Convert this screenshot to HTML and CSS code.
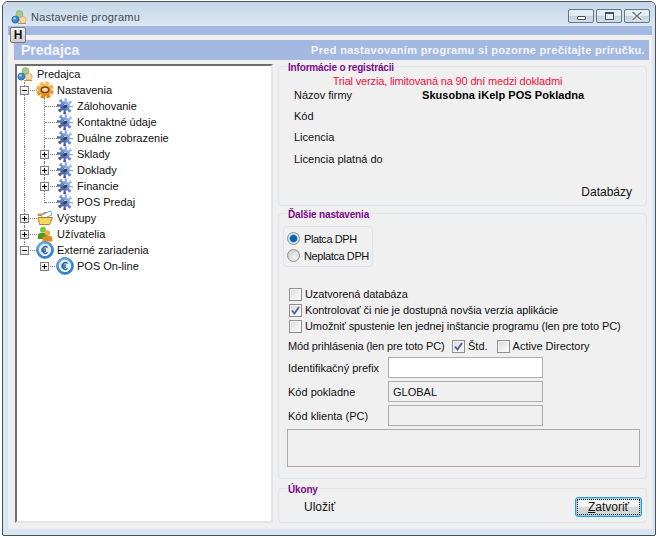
FILE: index.html
```html
<!DOCTYPE html>
<html lang="sk">
<head>
<meta charset="utf-8">
<title>Nastavenie programu</title>
<link rel="stylesheet" href="styles.css">
</head>
<body>
<svg class="defs" width="0" height="0" aria-hidden="true">
  <defs>
    <linearGradient id="gb" x1="0" y1="1" x2="1" y2="0">
      <stop offset="0" stop-color="#2c3f7c"/>
      <stop offset=".5" stop-color="#6a8bcd"/>
      <stop offset="1" stop-color="#bdd0f3"/>
    </linearGradient>
    <linearGradient id="go" x1="0" y1="0" x2="0" y2="1">
      <stop offset="0" stop-color="#f9c060"/>
      <stop offset="1" stop-color="#e5850f"/>
    </linearGradient>
    <radialGradient id="eb" cx=".4" cy=".3" r=".8">
      <stop offset="0" stop-color="#8ccaf2"/>
      <stop offset="1" stop-color="#1d6fbe"/>
    </radialGradient>
  </defs>
  <symbol id="gear" viewBox="0 0 16 16">
    <circle cx="8" cy="8" r="6.300" fill="none" stroke="url(#gb)" stroke-width="3.400" stroke-dasharray="2.500 2.450" stroke-dashoffset="1.200"/>
    <circle cx="8" cy="8" r="5" fill="url(#gb)"/>
    <circle cx="8" cy="8" r="2.200" fill="#2c3f7c"/>
    <path d="M6.500 7.500a2 2 0 0 1 3-.8" fill="none" stroke="#dce7fa" stroke-width="1"/>
  </symbol>
  <symbol id="gear-o" viewBox="0 0 18 18">
    <circle cx="9" cy="9" r="7.200" fill="none" stroke="url(#go)" stroke-width="3" stroke-dasharray="4.200 1.450"/>
    <circle cx="9" cy="9" r="6.200" fill="url(#go)"/>
    <ellipse cx="9" cy="8.800" rx="3.700" ry="2.800" fill="#f6d9a8" stroke="#7b4208" stroke-width="1.500"/>
  </symbol>
  <symbol id="logo" viewBox="0 0 16 16">
    <circle cx="8.500" cy="5" r="3.500" fill="#a9c98a" stroke="#6e9a52" stroke-width=".5"/>
    <circle cx="11.800" cy="10.800" r="3.400" fill="#f4d9a4" stroke="#c2924a" stroke-width=".6"/>
    <circle cx="4.400" cy="10.600" r="3.600" fill="#3b84cf" stroke="#23578f" stroke-width=".5"/>
    <circle cx="3.500" cy="9.400" r="1.200" fill="#b9dcf8"/>
    <path d="M7 14.500h8" stroke="#c98f3a" stroke-width="1"/>
  </symbol>
  <symbol id="euro" viewBox="0 0 18 18">
    <circle cx="9" cy="9" r="8.500" fill="url(#eb)" stroke="#2a6aa8" stroke-width=".6"/>
    <circle cx="9" cy="9" r="5.600" fill="#dfeaf4" stroke="#f2f7fb" stroke-width="1"/>
    <path d="M11.600 6.400A3.300 3.300 0 1 0 11.600 11.600M5.400 8.200h4.600M5.400 10h4.600" fill="none" stroke="#2a5f9c" stroke-width="1.300"/>
  </symbol>
  <symbol id="check" viewBox="0 0 11 11">
    <path d="M2 5.500 4.500 8.500 9 2" fill="none" stroke="#4a5f9c" stroke-width="1.900"/>
  </symbol>
</svg>

<div class="window">
  <header class="titlebar">
    <svg class="title-icon"><use href="#logo"/></svg>
    <span class="title-text">Nastavenie programu</span>
    <div class="controls">
      <span class="ctl"><span class="g-min"></span></span>
      <span class="ctl"><span class="g-max"></span></span>
      <span class="ctl ctl-x"><svg width="14" height="10" viewBox="0 0 14 10"><path d="M2.500 1 11.500 9M11.500 1 2.500 9" stroke="#fff" stroke-width="3.400"/><path d="M2.500 1 11.500 9M11.500 1 2.500 9" stroke="#5f6b7a" stroke-width="1.400"/></svg></span>
    </div>
  </header>

  <main class="client">
    <div class="band"><button class="h-btn" type="button">H</button></div>
    <div class="banner">
      <span class="banner-title">Predajca</span>
      <span class="banner-note">Pred nastavovaním programu si pozorne prečítajte príručku.</span>
    </div>

    <div class="columns">
      <nav class="tree">
        <div class="row"><svg class="ico ico-root"><use href="#logo"/></svg><span class="lbl">Predajca</span></div>
        <div class="row"><span class="cell t"><i class="exp minus"></i></span><svg class="ico ico-lg"><use href="#gear-o"/></svg><span class="lbl">Nastavenia</span></div>
        <div class="row"><span class="cell v"></span><span class="cell t"></span><svg class="ico"><use href="#gear"/></svg><span class="lbl">Zálohovanie</span></div>
        <div class="row"><span class="cell v"></span><span class="cell t"></span><svg class="ico"><use href="#gear"/></svg><span class="lbl">Kontaktné údaje</span></div>
        <div class="row"><span class="cell v"></span><span class="cell t"></span><svg class="ico"><use href="#gear"/></svg><span class="lbl">Duálne zobrazenie</span></div>
        <div class="row"><span class="cell v"></span><span class="cell t"><i class="exp plus"></i></span><svg class="ico"><use href="#gear"/></svg><span class="lbl">Sklady</span></div>
        <div class="row"><span class="cell v"></span><span class="cell t"><i class="exp plus"></i></span><svg class="ico"><use href="#gear"/></svg><span class="lbl">Doklady</span></div>
        <div class="row"><span class="cell v"></span><span class="cell t"><i class="exp plus"></i></span><svg class="ico"><use href="#gear"/></svg><span class="lbl">Financie</span></div>
        <div class="row"><span class="cell v"></span><span class="cell l"></span><svg class="ico"><use href="#gear"/></svg><span class="lbl">POS Predaj</span></div>
        <div class="row"><span class="cell t"><i class="exp plus"></i></span>
          <svg class="ico" viewBox="0 0 16 16"><path d="M1 4h5l1-1.500h6v3H1z" fill="#e8b73a" stroke="#a5761a" stroke-width=".7"/><path d="M4 5.500 13.500 .800l1.500 4L7 8.500z" fill="#fff" stroke="#5e86bd" stroke-width=".8"/><path d="M1 7.500h14.500L12.500 14.500H2.500z" fill="#f9d75e" stroke="#a5761a" stroke-width=".9"/></svg>
          <span class="lbl">Výstupy</span></div>
        <div class="row"><span class="cell t"><i class="exp plus"></i></span>
          <svg class="ico" viewBox="0 0 16 16"><circle cx="6" cy="3.800" r="3" fill="#7cc43c"/><path d="M1 13V9.500Q1 7 3.500 7h5Q11 7 11 9.500V13z" fill="#4f9a1f"/><circle cx="10.500" cy="7" r="2.800" fill="#f5a94a"/><path d="M5.500 15.500V12.500Q5.500 10 8 10h5Q15.500 10 15.500 12.500V15.500z" fill="#e68a22"/></svg>
          <span class="lbl">Užívatelia</span></div>
        <div class="row"><span class="cell l"><i class="exp minus"></i></span><svg class="ico ico-lg"><use href="#euro"/></svg><span class="lbl">Externé zariadenia</span></div>
        <div class="row"><span class="cell"></span><span class="cell h"><i class="exp plus"></i></span><svg class="ico ico-lg"><use href="#euro"/></svg><span class="lbl">POS On-line</span></div>
      </nav>

      <div class="side">
        <fieldset class="group group-reg">
          <legend>Informácie o registrácii</legend>
          <p class="trial">Trial verzia, limitovaná na 90 dní medzi dokladmi</p>
          <div class="reg-grid">
            <span>Názov firmy</span><b>Skusobna iKelp POS Pokladna</b>
            <span>Kód</span><span></span>
            <span>Licencia</span><span></span>
            <span>Licencia platná do</span><span></span>
          </div>
          <div class="db">Databázy</div>
        </fieldset>

        <fieldset class="group group-more">
          <legend>Ďalšie nastavenia</legend>
          <div class="radios">
            <label class="opt"><span class="radio on"></span>Platca DPH</label>
            <label class="opt"><span class="radio"></span>Neplatca DPH</label>
          </div>
          <div class="checks">
            <label class="opt"><span class="cb"></span>Uzatvorená databáza</label>
            <label class="opt"><span class="cb"><svg width="11" height="11"><use href="#check"/></svg></span>Kontrolovať či nie je dostupná novšia verzia aplikácie</label>
            <label class="opt"><span class="cb"></span>Umožniť spustenie len jednej inštancie programu (len pre toto PC)</label>
          </div>
          <div class="mode">
            <span class="mode-lbl">Mód prihlásenia (len pre toto PC)</span>
            <label class="opt"><span class="cb"><svg width="11" height="11"><use href="#check"/></svg></span>Štd.</label>
            <label class="opt"><span class="cb"></span>Active Directory</label>
          </div>
          <div class="fields">
            <span>Identifikačný prefix</span><span class="box box-white"></span>
            <span>Kód pokladne</span><span class="box">GLOBAL</span>
            <span>Kód klienta (PC)</span><span class="box"></span>
          </div>
          <div class="memo"></div>
        </fieldset>

        <fieldset class="group group-act">
          <legend>Úkony</legend>
          <div class="actions">
            <span class="save">Uložiť</span>
            <button class="close" type="button"><span class="focus"><u>Z</u>atvoriť</span></button>
          </div>
        </fieldset>
      </div>
    </div>
  </main>
</div>
</body>
</html>
```

FILE: styles.css
```css
* { box-sizing: border-box; }
html, body { margin: 0; padding: 0; background: #fff; }
body {
  width: 660px;
  height: 538px;
  padding: 1px 0 0 2px;
  font: 11px/14px "Liberation Sans", Arial, sans-serif;
  color: #111;
  overflow: hidden;
}
.defs { position: absolute; }

.window {
  width: 654px;
  height: 535px;
  display: flex;
  flex-direction: column;
  border: 1px solid #4c4f55;
  border-radius: 6px 6px 2px 2px;
  background: #d8e6f3;
  padding: 0 3px 6px 5px;
}

.titlebar {
  height: 24px;
  margin: 0 -3px 0 -5px;
  padding: 6px 5px 0 8px;
  display: flex;
  align-items: center;
  border-radius: 5px 5px 0 0;
  background: linear-gradient(#c6d7e8, #dbe7f3);
}
.title-icon { width: 16px; height: 16px; }
.title-text { margin-left: 4px; color: #444c56; letter-spacing: .2px; }
.controls { margin-left: auto; display: flex; gap: 2px; align-self: flex-start; margin-top: 1px; }
.ctl {
  width: 26px;
  height: 14px;
  display: flex;
  align-items: center;
  justify-content: center;
  border: 1px solid #66758a;
  border-radius: 2px;
  background: linear-gradient(#e4ecf4 45%, #c4d2e0 50%, #d3dee9);
}
.g-min { width: 9px; height: 4px; margin-top: 3px; border: 1px solid #47505c; border-radius: 1px; background: #fff; }
.g-max { width: 9px; height: 8px; border: 1px solid #47505c; border-top-width: 2px; background: #e6edf5; }

.client {
  flex: 1;
  min-height: 0;
  display: flex;
  flex-direction: column;
  background: #f0f0f0;
  position: relative;
}
.band { height: 9px; background: #a4b9e1; flex: none; }
.h-btn {
  position: absolute;
  left: 2px;
  top: 1px;
  width: 16px;
  height: 16px;
  padding: 0;
  border: 1px solid #777;
  border-radius: 2px;
  background: linear-gradient(#f4f4f4, #cfcfcf);
  font: bold 12px/12px "Liberation Sans", Arial, sans-serif;
  color: #111;
}
.banner {
  height: 20px;
  margin: 5px 3px 0 6px;
  padding: 0 4px 0 7px;
  flex: none;
  display: flex;
  align-items: center;
  justify-content: space-between;
  background: #a4b9e1;
  color: #f2f5fc;
  font-weight: bold;
}
.banner-title { font-size: 14px; }
.banner-note { letter-spacing: .32px; }

.columns {
  flex: 1;
  min-height: 0;
  display: flex;
  margin: 0 5px 0 7px;
  gap: 5px;
}

.tree {
  width: 258px;
  height: 459px;
  margin-top: 4px;
  background: #fff;
  border: 2px solid #e4e4e4;
  border-top-color: #6e6e6e;
  border-left-color: #6e6e6e;
}
.row { height: 16px; display: flex; align-items: center; white-space: nowrap; }
.lbl { margin-left: 4px; }
.ico { width: 16px; height: 16px; flex: none; }
.ico-lg { width: 18px; height: 18px; margin: 0 -1px 0 -1px; }
.ico-root { margin-left: 0; }
.cell { width: 20px; height: 16px; flex: none; position: relative; }
.cell.v::before, .cell.t::before, .cell.l::before {
  content: "";
  position: absolute;
  left: 7px;
  top: 0;
  height: 16px;
  border-left: 1px dotted #808080;
}
.cell.l::before { height: 9px; }
.cell.t::after, .cell.l::after, .cell.h::after {
  content: "";
  position: absolute;
  left: 8px;
  top: 8px;
  width: 12px;
  border-top: 1px dotted #808080;
}
.exp {
  position: absolute;
  z-index: 1;
  left: 3px;
  top: 4px;
  width: 9px;
  height: 9px;
  border: 1px solid #808080;
  background: linear-gradient(#fff, #e4e4e4);
}
.exp::before {
  content: "";
  position: absolute;
  left: 1px;
  top: 3px;
  width: 5px;
  height: 1px;
  background: #000;
}
.exp.plus::after {
  content: "";
  position: absolute;
  left: 3px;
  top: 1px;
  width: 1px;
  height: 5px;
  background: #000;
}

.side { flex: 1; min-width: 0; display: flex; flex-direction: column; }
.group {
  margin: 0;
  padding: 0 5px;
  border: 1px solid #dde5ee;
  border-radius: 4px;
  min-width: 0;
}
.group legend {
  position: relative;
  top: 2px;
  padding: 0 1px;
  margin-left: 3px;
  height: 12px;
  font: bold 10px/12px "Liberation Sans", Arial, sans-serif;
  letter-spacing: -.17px;
  color: #7a0a8c;
}
.group-reg { height: 146px; }
.group-more { height: 272px; margin-top: 1px; }
.group-act { height: 41px; margin-top: 3px; }

.trial { margin: 2px 30px 0 0; text-align: center; color: #f0103c; letter-spacing: -.16px; }
.reg-grid {
  display: grid;
  grid-template-columns: 128px 1fr;
  grid-auto-rows: 21.300px;
  margin: -4px 0 0 10px;
  align-items: center;
}
.reg-grid b { color: #000; letter-spacing: .05px; }
.db { margin: 16px 9px 0 0; text-align: right; font-size: 12px; }

.opt { display: flex; align-items: center; white-space: nowrap; }
.radios {
  width: 90px;
  height: 41px;
  margin-top: 7px;
  margin-left: -1px;
  padding: 3px 0 0 3px;
  border: 1px solid #dfe4ea;
  border-radius: 4px;
  letter-spacing: -.4px;
}
.radio {
  width: 13px;
  height: 13px;
  margin-right: 4px;
  flex: none;
  border: 1px solid #8e9297;
  border-radius: 50%;
  background: radial-gradient(circle at 60% 65%, #f4f4f4, #c4c4c4);
}
.radio.on { background: radial-gradient(circle, #0e5fa8 0 3px, #3aa0e0 3.500px, #dde6ee 4.500px); }
.radios .opt { height: 17px; }
.cb {
  width: 13px;
  height: 13px;
  margin-right: 3px;
  flex: none;
  display: flex;
  border: 1px solid #8e8f8f;
  background: linear-gradient(135deg, #d8d8d8, #fff);
  box-shadow: inset 0 0 0 1px #f4f4f4;
}
.checks { margin: 19px 0 0 5px; letter-spacing: -.1px; }
.checks .opt { height: 16px; }
.mode { display: flex; align-items: center; height: 16px; margin-top: 4px; margin-left: 4px; }
.mode-lbl { width: 164px; white-space: nowrap; letter-spacing: -.15px; }
.mode .opt + .opt { margin-left: 9px; }
.fields {
  display: grid;
  grid-template-columns: 100px 155px;
  grid-auto-rows: 21px;
  row-gap: 3px;
  margin: 3px 0 0 4px;
  align-items: center;
}
.box {
  height: 21px;
  padding: 0 4px;
  display: flex;
  align-items: center;
  border: 1px solid #acacac;
  background: #f0f0f0;
}
.box-white { background: #fff; }
.memo {
  height: 38px;
  margin: 3px 1px 0 3px;
  border: 1px solid #acacac;
  background: #efefef;
}

.actions { display: flex; align-items: center; justify-content: space-between; padding: 3px 0 0 20px; margin-right: -1px; }
.save { font-size: 12px; }
.close {
  width: 67px;
  height: 20px;
  padding: 1px;
  border: 1px solid #2b9bdb;
  border-radius: 3px;
  background: linear-gradient(#f6f6f6 45%, #dcdcdc 50%, #cfcfcf);
  box-shadow: inset 0 0 0 1px #8fd3f4;
  font: 12px/14px "Liberation Sans", Arial, sans-serif;
  color: #111;
}
.focus {
  display: block;
  height: 16px;
  border: 1px dotted #000;
}
```
